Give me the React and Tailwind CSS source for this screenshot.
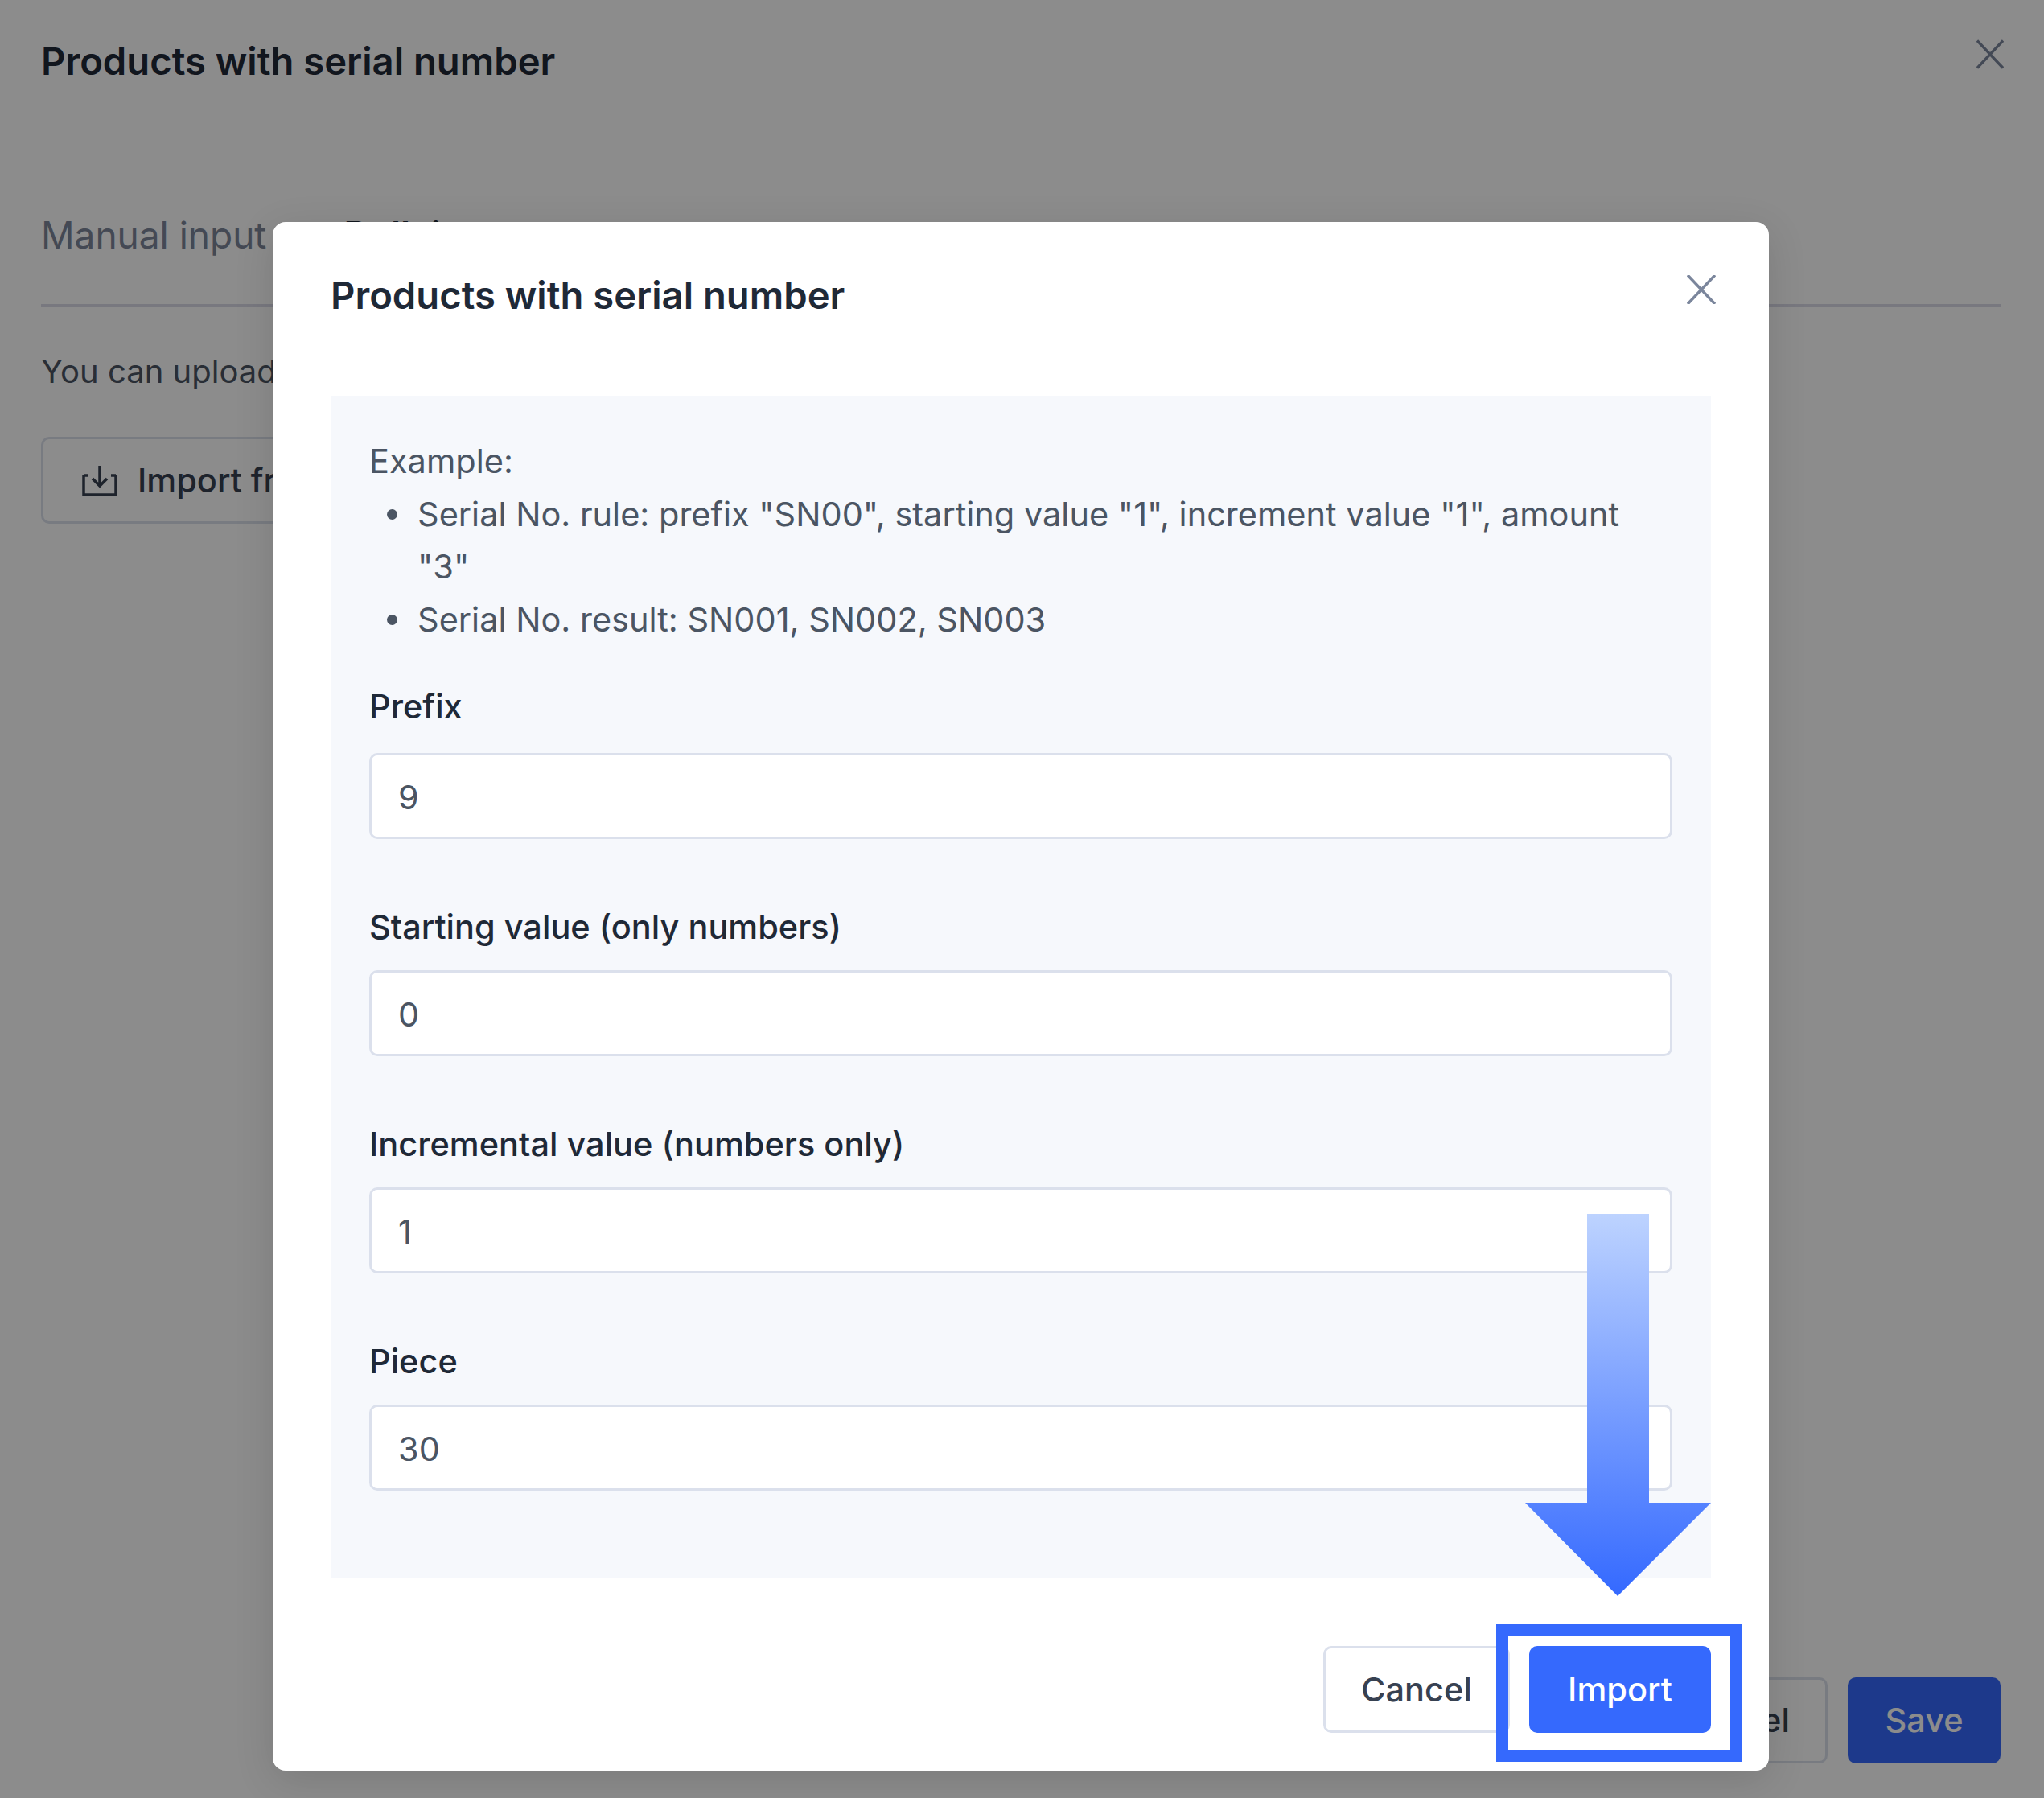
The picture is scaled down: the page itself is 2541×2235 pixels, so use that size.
import { useState } from "react";

const FIELDS = [
  { label: "Prefix", value: "9", gap: "mt-[25px]" },
  { label: "Starting value (only numbers)", value: "0", gap: "mt-[21px]" },
  { label: "Incremental value (numbers only)", value: "1", gap: "mt-[21px]" },
  { label: "Piece", value: "30", gap: "mt-[21px]" },
];

const BULLET =
  "relative before:absolute before:left-[-38px] before:top-[26px] before:w-[13px] before:h-[13px] before:rounded-full before:bg-[#4b5563]";

function CloseIcon({ className }) {
  return (
    <svg viewBox="0 0 36 36" className={className} fill="none" stroke="currentColor" strokeWidth="3.5">
      <path d="M1 0 L35 36 M35 0 L1 36" />
    </svg>
  );
}

function Field({ label, value, gap }) {
  return (
    <div className="mb-[76px]">
      <label className="block h-[66px] leading-[66px] text-[#1f2937] font-medium">{label}</label>
      <input
        readOnly
        value={value}
        className={`${gap} block w-full h-[107px] px-[33px] pt-[3px] bg-white border-[3px] border-[#dbe0ec] rounded-[10px] text-[#4b5563] outline-none`}
      />
    </div>
  );
}

export default function App() {
  const [fields] = useState(FIELDS);

  return (
    <div className="relative w-[2541px] h-[2235px] overflow-hidden bg-white text-[41.5px] font-['Inter',sans-serif]">
      {/* page behind the dialog */}
      <div className="flex flex-col h-full pl-[51px] pr-[54px] pb-[43px]">
        <div className="flex justify-between pt-[40px]">
          <h1 className="text-[47.2px] leading-[72px] font-semibold text-[#1f2937]">Products with serial number</h1>
          <CloseIcon className="w-[34px] h-[37px] mt-[9px] mr-[-4px] text-[#7b869c]" />
        </div>
        <div className="flex gap-[96px] mt-[144px] pb-[50px] border-b-[3px] border-[#dbdbe8] text-[46px] leading-[72px]">
          <span className="text-[#7c8699]">Manual input</span>
          <span className="font-semibold text-[#1f2937]">Bulk import</span>
        </div>
        <p className="mt-[48px] leading-[66px] text-[40px] text-[#4b5563]">You can upload files</p>
        <button className="flex items-center gap-[25px] self-start h-[108px] mt-[48px] pl-[48px] pr-[48px] border-[3px] border-[#dbe0ec] rounded-[10px] text-[#374151] font-medium">
          <svg viewBox="0 0 44 40" className="w-[44px] h-[40px]" fill="none" stroke="currentColor" strokeWidth="3.5">
            <path d="M2 14 H8 M36 14 H42 M2 14 V38 H42 V14 M22 2 V26 M13 18 L22 27 L31 18" />
          </svg>
          Import from
        </button>
        <div className="flex justify-end gap-[25px] mt-auto">
          <button className="w-[232px] h-[107px] border-[3px] border-[#dbe0ec] rounded-[10px] text-[#374151] font-medium">Cancel</button>
          <button className="w-[190px] h-[107px] bg-[#3569fd] rounded-[10px] text-white font-medium">Save</button>
        </div>
      </div>

      {/* dim */}
      <div className="absolute inset-0 bg-black/45" />

      {/* dialog */}
      <div className="absolute left-[339px] top-[276px] w-[1860px] h-[1925px] px-[72px] bg-white rounded-[16px] shadow-[0_12px_50px_rgba(0,0,0,0.12)]">
        <div className="flex justify-between h-[216px] pt-[55px]">
          <h2 className="text-[47.2px] leading-[72px] font-semibold text-[#1f2937]">Products with serial number</h2>
          <CloseIcon className="w-[36px] h-[36px] mt-[11px] mr-[-6px] text-[#7b869c]" />
        </div>

        <div className="bg-[#f6f8fc] h-[1470px] pt-[49px] px-[48px] text-[#4b5563] leading-[65.6px]">
          <p>Example:</p>
          <ul className="pl-[60px]">
            <li className={BULLET}>Serial No. rule: prefix "SN00", starting value "1", increment value "1", amount "3"</li>
            <li className={BULLET}>Serial No. result: SN001, SN002, SN003</li>
          </ul>
          <div className="mt-[42px]">
            {fields.map((f) => (
              <Field key={f.label} label={f.label} value={f.value} gap={f.gap} />
            ))}
          </div>
        </div>

        <div className="flex justify-end gap-[24px] mt-[84px]">
          <button className="w-[232px] h-[108px] bg-white border-[3px] border-[#dbe0ec] rounded-[10px] text-[#374151] font-medium">Cancel</button>
          <button className="w-[226px] h-[108px] bg-[#3569fd] rounded-[10px] text-white font-medium">Import</button>
        </div>
      </div>

      {/* annotation: arrow + highlight box */}
      <svg className="absolute left-[1896px] top-[1509px] w-[231px] h-[475px]" viewBox="0 0 231 475">
        <defs>
          <linearGradient id="arrowFill" x1="0" y1="0" x2="0" y2="1">
            <stop offset="0" stopColor="#bdd3ff" />
            <stop offset="1" stopColor="#3469ff" />
          </linearGradient>
        </defs>
        <path d="M77 0 H154 V359 H231 L115 475 L0 359 H77 Z" fill="url(#arrowFill)" />
      </svg>
      <div className="absolute left-[1860px] top-[2019px] w-[306px] h-[171px] border-[15px] border-[#3569fd]" />
    </div>
  );
}
